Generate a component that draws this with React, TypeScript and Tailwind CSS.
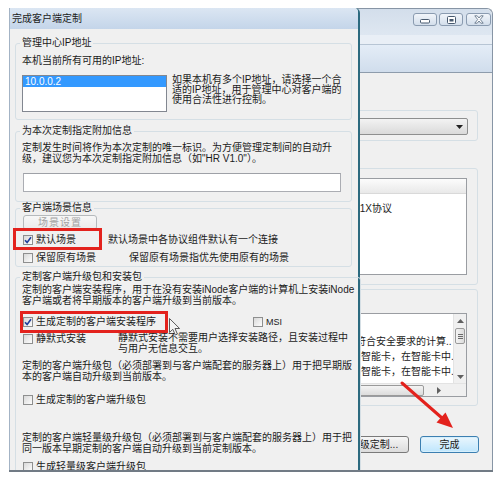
import React from "react";

type BoxProps = { checked?: boolean; className?: string };

function Box({ checked = false, className = "" }: BoxProps) {
    return (
        <span
            className={`flex items-center justify-center w-[10px] h-[10px] shrink-0 border border-[#8e8f8f] bg-gradient-to-br from-[#d9d9d9] to-[#fdfdfd] ${className}`}
        >
            {checked && (
                <svg viewBox="0 0 8 8" className="w-[8px] h-[8px]">
                    <path d="M1 4.2 L3.1 6.4 L7 1.2" fill="none" stroke="#1f3f9c" strokeWidth="1.6" />
                </svg>
            )}
        </span>
    );
}

function CheckRow({ label, checked = false, width }: { label: string; checked?: boolean; width?: string }) {
    return (
        <div className={`flex items-center h-[16px] shrink-0 ${width ?? ""}`}>
            <Box checked={checked} className="ml-[1px]" />
            <span className="ml-[3px] whitespace-nowrap">{label}</span>
        </div>
    );
}

function Lines({ lines, lead = "leading-[11px]" }: { lines: string[]; lead?: string }) {
    return (
        <div className={`${lead} whitespace-nowrap`}>
            {lines.map((l, i) => (
                <div key={i}>{l}</div>
            ))}
        </div>
    );
}

function CapButton({ kind }: { kind: "min" | "max" | "close" }) {
    return (
        <div
            className={`flex items-center justify-center h-[13px] rounded-[3px] border border-[#8a9bb0] bg-gradient-to-b from-[#f1f5fa] to-[#d3deeb] ${
                kind === "close" ? "w-[25px] ml-[3px]" : kind === "max" ? "w-[24px] ml-[2px]" : "w-[24px]"
            }`}
        >
            {kind === "min" && (
                <svg viewBox="0 0 10 5" className="w-[10px] h-[5px] mt-[3px]">
                    <rect x="0.5" y="0.5" width="9" height="3.5" rx="1" fill="#fff" stroke="#47596e" />
                </svg>
            )}
            {kind === "max" && (
                <svg viewBox="0 0 9 8" className="w-[9px] h-[8px]">
                    <rect x="0.5" y="0.5" width="8" height="7" rx="1" fill="#fff" stroke="#47596e" />
                    <rect x="2.5" y="3" width="4" height="2.5" fill="#47596e" />
                </svg>
            )}
            {kind === "close" && (
                <svg viewBox="0 0 10 9" className="w-[10px] h-[9px]">
                    <path
                        d="M0.8 0.8 H3.2 L5 3 L6.8 0.8 H9.2 L6.3 4.5 L9.2 8.2 H6.8 L5 6 L3.2 8.2 H0.8 L3.7 4.5 Z"
                        fill="#fff"
                        stroke="#56687d"
                        strokeWidth="0.8"
                    />
                </svg>
            )}
        </div>
    );
}

function BackWindow() {
    return (
        <div className="absolute inset-0 flex flex-col border border-b-0 border-[#8795a5] rounded-t-[6px] bg-[#f0f0f0]">
            {/* caption */}
            <div className="h-[26px] shrink-0 flex justify-end items-start pt-[4px] pr-[1px] rounded-t-[6px] bg-gradient-to-b from-[#d3deeb] to-[#dee7f1]">
                <CapButton kind="min" />
                <CapButton kind="max" />
                <CapButton kind="close" />
            </div>
            <div className="h-[10px] shrink-0 bg-[#e9eff6] border-b border-[#b7c5d4]" />
            <div className="h-[28px] shrink-0 bg-gradient-to-b from-[#e4edf7] to-[#d0ddec] border-b border-[#8e9cac]" />

            <div className="flex-1 flex flex-col pl-[250px] pr-[14px]">
                {/* combo */}
                <div className="mt-[37px] h-[31px] shrink-0 flex justify-end items-start pt-[7px] pr-[9px] rounded-[3px] border border-[#d5dfe5]">
                    <div className="w-[150px] h-[17px] flex items-center justify-end pr-[4px] rounded-[2px] border border-[#8e8f8f] bg-gradient-to-b from-[#f3f3f3] to-[#dadada]">
                        <svg viewBox="0 0 7 4" className="w-[7px] h-[4px]">
                            <path d="M0 0 H7 L3.5 4 Z" fill="#222" />
                        </svg>
                    </div>
                </div>

                {/* protocol list */}
                <div className="mt-[27px] h-[117px] shrink-0 flex justify-end items-start pt-[9px] pr-[10px] rounded-[3px] border border-[#d5dfe5]">
                    <div className="w-[160px] h-[97px] flex flex-col border border-[#9a9da2] bg-white">
                        <div className="h-[15px] shrink-0 bg-gradient-to-b from-[#fcfcfc] to-[#e9e9e9] border-b border-[#d9d9d9]" />
                        <div className="mt-[7px] h-[15px] leading-[15px] pl-[49px] whitespace-nowrap">.1X协议</div>
                    </div>
                </div>

                {/* second list */}
                <div className="mt-[4px] h-[117px] shrink-0 flex justify-end items-start pt-[23px] pr-[10px] rounded-[3px] border border-[#d5dfe5]">
                    <div className="w-[150px] h-[84px] flex flex-col border border-[#9a9da2] bg-white">
                        <div className="flex-1 flex min-h-0">
                            <div className="flex-1 min-w-0 overflow-hidden pt-[20px] whitespace-nowrap">
                                <div className="h-[15px] leading-[15px] pl-[38px]">符合安全要求的计算..</div>
                                <div className="h-[15px] leading-[15px] pl-[43px]">智能卡，在智能卡中.</div>
                                <div className="h-[15px] leading-[15px] pl-[43px]">智能卡，在智能卡中.</div>
                            </div>
                            <div className="w-[13px] shrink-0 flex flex-col items-center bg-[#f0f0f0] border-l border-[#e3e3e3]">
                                <svg viewBox="0 0 7 4" className="w-[7px] h-[4px] mt-[5px]">
                                    <path d="M0 4 L3.5 0 L7 4 Z" fill="#606060" />
                                </svg>
                                <div className="mt-[5px] w-[10px] h-[16px] flex items-center justify-center rounded-[2px] border border-[#9a9a9a] bg-gradient-to-r from-[#f4f4f4] to-[#dcdcdc]">
                                    <svg viewBox="0 0 5 5" className="w-[5px] h-[5px]">
                                        <path d="M0 0.5 H5 M0 2.5 H5 M0 4.5 H5" stroke="#6a6a6a" strokeWidth="1" />
                                    </svg>
                                </div>
                                <div className="flex-1" />
                                <svg viewBox="0 0 7 4" className="w-[7px] h-[4px] mb-[4px]">
                                    <path d="M0 0 L3.5 4 L7 0 Z" fill="#606060" />
                                </svg>
                            </div>
                        </div>
                        <div className="h-[13px] shrink-0 flex items-center bg-[#f0f0f0] border-t border-[#e3e3e3]">
                            <div className="ml-[34px] w-[72px] h-[11px] rounded-[2px] border border-[#9a9a9a] bg-gradient-to-b from-[#f4f4f4] to-[#dcdcdc]" />
                            <div className="flex-1 flex justify-center">
                                <svg viewBox="0 0 4 7" className="w-[4px] h-[7px]">
                                    <path d="M0 0 L4 3.5 L0 7 Z" fill="#606060" />
                                </svg>
                            </div>
                            <div className="w-[13px]" />
                        </div>
                    </div>
                </div>

                {/* buttons */}
                <div className="mt-[30px] -mr-[1px] flex justify-end gap-[11px]">
                    <div className="w-[70px] h-[17px] flex items-center justify-center rounded-[3px] border border-[#7a7a7a] bg-gradient-to-b from-[#f6f6f6] to-[#dcdcdc]">
                        高级定制...
                    </div>
                    <div className="w-[59px] h-[17px] flex items-center justify-center rounded-[3px] border border-[#3c7fb1] bg-gradient-to-b from-[#eaf6fd] to-[#bee6fd] shadow-[inset_0_0_0_1px_#d6effc]">
                        完成
                    </div>
                </div>
            </div>
        </div>
    );
}

function Dialog() {
    return (
        <div className="absolute left-0 top-0 w-[351px] h-[470px] flex flex-col border-l border-[#a3b3c5] border-r-2 border-r-[#2c6a7f] rounded-tr-[5px] bg-[#f0f0f0]">
            <div className="h-[21px] shrink-0 flex items-center pl-[2px] rounded-tr-[4px] bg-gradient-to-b from-[#dbe6f3] to-[#c4d5e9]">
                完成客户端定制
            </div>

            <div className="relative flex-1 flex flex-col pl-[5px] pr-[6px]">
                {/* IP address */}
                <fieldset className="mt-[8px] h-[83px] shrink-0 rounded-[3px] border border-[#d5dfe5] px-[6px]">
                    <legend className="-ml-[2px] px-[2px]">管理中心IP地址</legend>
                    <div className="mt-[6px]">本机当前所有可用的IP地址:</div>
                    <div className="mt-[8px] flex items-start">
                        <div className="w-[145px] h-[37px] shrink-0 border border-[#828790] bg-white">
                            <div className="h-[11px] leading-[11px] pl-[2px] bg-[#3399ff] text-white">10.0.0.2</div>
                        </div>
                        <div className="ml-[5px]">
                            <Lines
                                lead="leading-[10px]"
                                lines={[
                                    "如果本机有多个IP地址，请选择一个合",
                                    "适的IP地址，用于管理中心对客户端的",
                                    "使用合法性进行控制。",
                                ]}
                            />
                        </div>
                    </div>
                </fieldset>

                {/* extra info */}
                <fieldset className="mt-[5px] h-[77px] shrink-0 rounded-[3px] border border-[#d5dfe5] px-[6px]">
                    <legend className="-ml-[2px] px-[2px]">为本次定制指定附加信息</legend>
                    <div className="mt-[5px]">
                        <Lines
                            lines={[
                                "定制发生时间将作为本次定制的唯一标识。为方便管理定制间的自动升",
                                '级，建议您为本次定制指定附加信息（如"HR V1.0"）。',
                            ]}
                        />
                    </div>
                    <div className="mt-[9px] ml-[1px] w-[318px] h-[19px] border border-[#abadb3] border-t-[#9ea1a7] bg-white" />
                </fieldset>

                {/* scene */}
                <fieldset className="h-[65px] shrink-0 rounded-[3px] border border-[#d5dfe5] px-[6px]">
                    <legend className="-ml-[2px] px-[2px]">客户端场景信息</legend>
                    <div className="mt-[1px] ml-[1px] w-[74px] h-[15px] flex items-center justify-center rounded-[3px] border border-[#b5b9bc] bg-gradient-to-b from-[#f7f7f7] to-[#ebebeb] text-[#a3a3a3] tracking-[1px]">
                        场景设置
                    </div>
                    <div className="mt-[2px] flex items-center">
                        <CheckRow label="默认场景" checked width="w-[86px]" />
                        <span className="whitespace-nowrap">默认场景中各协议组件默认有一个连接</span>
                    </div>
                    <div className="mt-[2px] flex items-center">
                        <CheckRow label="保留原有场景" width="w-[107px]" />
                        <span className="whitespace-nowrap">保留原有场景指优先使用原有的场景</span>
                    </div>
                </fieldset>

                {/* packages */}
                <fieldset className="mt-[4px] h-[220px] shrink-0 rounded-[3px] border border-[#d5dfe5] px-[6px]">
                    <legend className="-ml-[2px] px-[2px]">定制客户端升级包和安装包</legend>
                    <div className="mt-[1px]">
                        <Lines
                            lines={[
                                "定制的客户端安装程序，用于在没有安装iNode客户端的计算机上安装iNode",
                                "客户端或者将早期版本的客户端升级到当前版本。",
                            ]}
                        />
                    </div>
                    <div className="mt-[8px] flex items-center">
                        <CheckRow label="生成定制的客户端安装程序" checked width="w-[230px]" />
                        <Box className="ml-[1px]" />
                        <span className="ml-[3px] text-[9px]">MSI</span>
                    </div>
                    <div className="mt-[2px] flex items-start">
                        <div className="w-[96px] shrink-0 mt-[-1px]">
                            <CheckRow label="静默式安装" />
                        </div>
                        <Lines lines={["静默式安装不需要用户选择安装路径，且安装过程中", "与用户无信息交互。"]} />
                    </div>
                    <div className="mt-[6px]">
                        <Lines
                            lines={[
                                "定制的客户端升级包（必须部署到与客户端配套的服务器上）用于把早期版",
                                "本的客户端自动升级到当前版本。",
                            ]}
                        />
                    </div>
                    <div className="mt-[10px]">
                        <CheckRow label="生成定制的客户端升级包" />
                    </div>
                    <div className="mt-[24px]">
                        <Lines
                            lines={[
                                "定制的客户端轻量级升级包（必须部署到与客户端配套的服务器上）用于把",
                                "同一版本早期定制的客户端自动升级到当前定制版本。",
                            ]}
                        />
                    </div>
                    <div className="mt-[5px]">
                        <CheckRow label="生成轻量级客户端升级包" />
                    </div>
                </fieldset>

                {/* highlight boxes */}
                <div className="absolute left-[3px] top-[199px] w-[89px] h-[22px] border-[3px] border-[#e3221d]" />
                <div className="absolute left-[10px] top-[282px] w-[148px] h-[22px] border-[3px] border-[#e3221d]" />

                {/* mouse pointer */}
                <svg viewBox="0 0 12 19" className="absolute left-[159px] top-[289px] w-[12px] h-[19px]">
                    <path
                        d="M0.5 0.5 L0.5 14.5 L3.8 11.3 L6.3 17 L8.4 16.1 L6 10.5 L10.6 10.5 Z"
                        fill="#f4f4f4"
                        stroke="#5a5a5a"
                        strokeWidth="1"
                    />
                </svg>
            </div>
        </div>
    );
}

function RedArrow() {
    return (
        <svg viewBox="0 0 70 62" className="absolute left-[380px] top-[365px] w-[70px] h-[62px]">
            <line x1="13" y1="10" x2="53" y2="45" stroke="#e3221d" strokeWidth="3" strokeLinecap="round" />
            <path d="M64 55 L47.5 49.5 L56.5 39.5 Z" fill="#e3221d" />
        </svg>
    );
}

export default function App() {
    return (
        <div className="relative w-[503px] h-[479px] overflow-hidden bg-white font-['Liberation_Sans','Noto_Sans_CJK_SC',sans-serif] text-[10px] leading-[12px] text-[#1b1b1b]">
            <div className="absolute left-[9px] top-[8px] w-[484px] h-[464px] overflow-hidden border-b-2 border-[#717b85]">
                <BackWindow />
                <Dialog />
                <RedArrow />
            </div>
        </div>
    );
}
